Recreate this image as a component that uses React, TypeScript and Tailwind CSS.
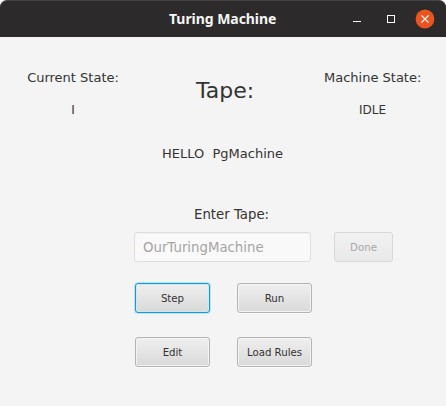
import type { ReactNode } from "react";

function PushButton({ children, focused = false }: { children: ReactNode; focused?: boolean }) {
  return (
    <button
      className={`flex h-[30px] w-[75px] items-center justify-center rounded-[3px] border bg-linear-to-b from-[#efefef] to-[#d9d9d9] pt-[2px] text-[10.2px] text-[#333333] ${
        focused
          ? "border-[#0c9ed6] shadow-[0_0_0_1px_#bfe2ef,inset_0_0_0_1px_#d3e6ed]"
          : "border-[#b4b4b4] shadow-[inset_0_0_0_1px_#f3f3f3,0_1px_0_#fafafa]"
      }`}
    >
      {children}
    </button>
  );
}

function TitleBar() {
  return (
    <header className="flex h-[37px] items-center rounded-t-[7px] border-t border-[#454344] bg-[#2c2a2b]">
      <h1 className="ml-[169px] w-[107px] whitespace-nowrap font-['Noto_Sans',sans-serif] text-[14px] leading-[20px] font-bold tracking-[-0.05px] text-[#f5f5f5]">
        Turing Machine
      </h1>
      <svg className="ml-auto" width="106" height="36" viewBox="340 1 106 36" fill="none">
        <path d="M353 21.5h8" stroke="#fff" />
        <rect x="387.5" y="15.5" width="7" height="7" stroke="#fff" />
        <circle cx="425" cy="19" r="9.4" fill="#e95420" />
        <path d="m421.4 15.4 7.2 7.2m0-7.2-7.2 7.2" stroke="#fff" strokeWidth="1.3" />
      </svg>
    </header>
  );
}

export default function App() {
  return (
    <div className="h-[406px] w-[446px] overflow-hidden bg-white font-['DejaVu_Sans',sans-serif] text-[#333333]">
      <TitleBar />
      <main className="h-[369px] bg-[#f4f4f4] pt-[33px] whitespace-nowrap">
        <section className="flex h-[76px] pl-[27px]">
          <div className="w-[92px] text-center">
            <p className="text-[13px] leading-[16px]">Current State:</p>
            <p className="mt-4 text-[12px] leading-[16px]">I</p>
          </div>
          <h2 className="ml-[77px] w-[128px] pt-[7px] text-[22px] leading-[28px]">Tape:</h2>
          <div className="w-[97px] text-center">
            <p className="text-[13px] leading-[16px]">Machine State:</p>
            <p className="mt-4 text-[12px] leading-[16px]">IDLE</p>
          </div>
        </section>
        <p className="pl-[162px] text-[13px] leading-[16px] whitespace-pre">HELLO  PgMachine</p>
        <label className="mt-[45px] block pl-[194px] text-[13.3px] leading-[16px]">Enter Tape:</label>
        <div className="mt-[9px] flex gap-[23px] pl-[134px]">
          <div className="flex h-[30px] w-[177px] items-center rounded-[3px] border border-[#dedede] bg-[#f9f9f9] pt-[2px] pl-2 text-[13.3px] text-[#a5a5a5] shadow-[inset_0_1px_1px_#f0f0f0]">
            OurTuringMachine
          </div>
          <button
            disabled
            className="flex h-[30px] w-[59px] items-center justify-center rounded-[3px] border border-[#d8d8d8] bg-linear-to-b from-[#f1f1f1] to-[#e9e9e9] pt-[2px] text-[10.2px] text-[#a8a8a8]"
          >
            Done
          </button>
        </div>
        <div className="mt-[21px] grid w-fit grid-cols-2 gap-x-[27px] gap-y-[24px] pl-[135px]">
          <PushButton focused>Step</PushButton>
          <PushButton>Run</PushButton>
          <PushButton>Edit</PushButton>
          <PushButton>Load Rules</PushButton>
        </div>
      </main>
    </div>
  );
}
